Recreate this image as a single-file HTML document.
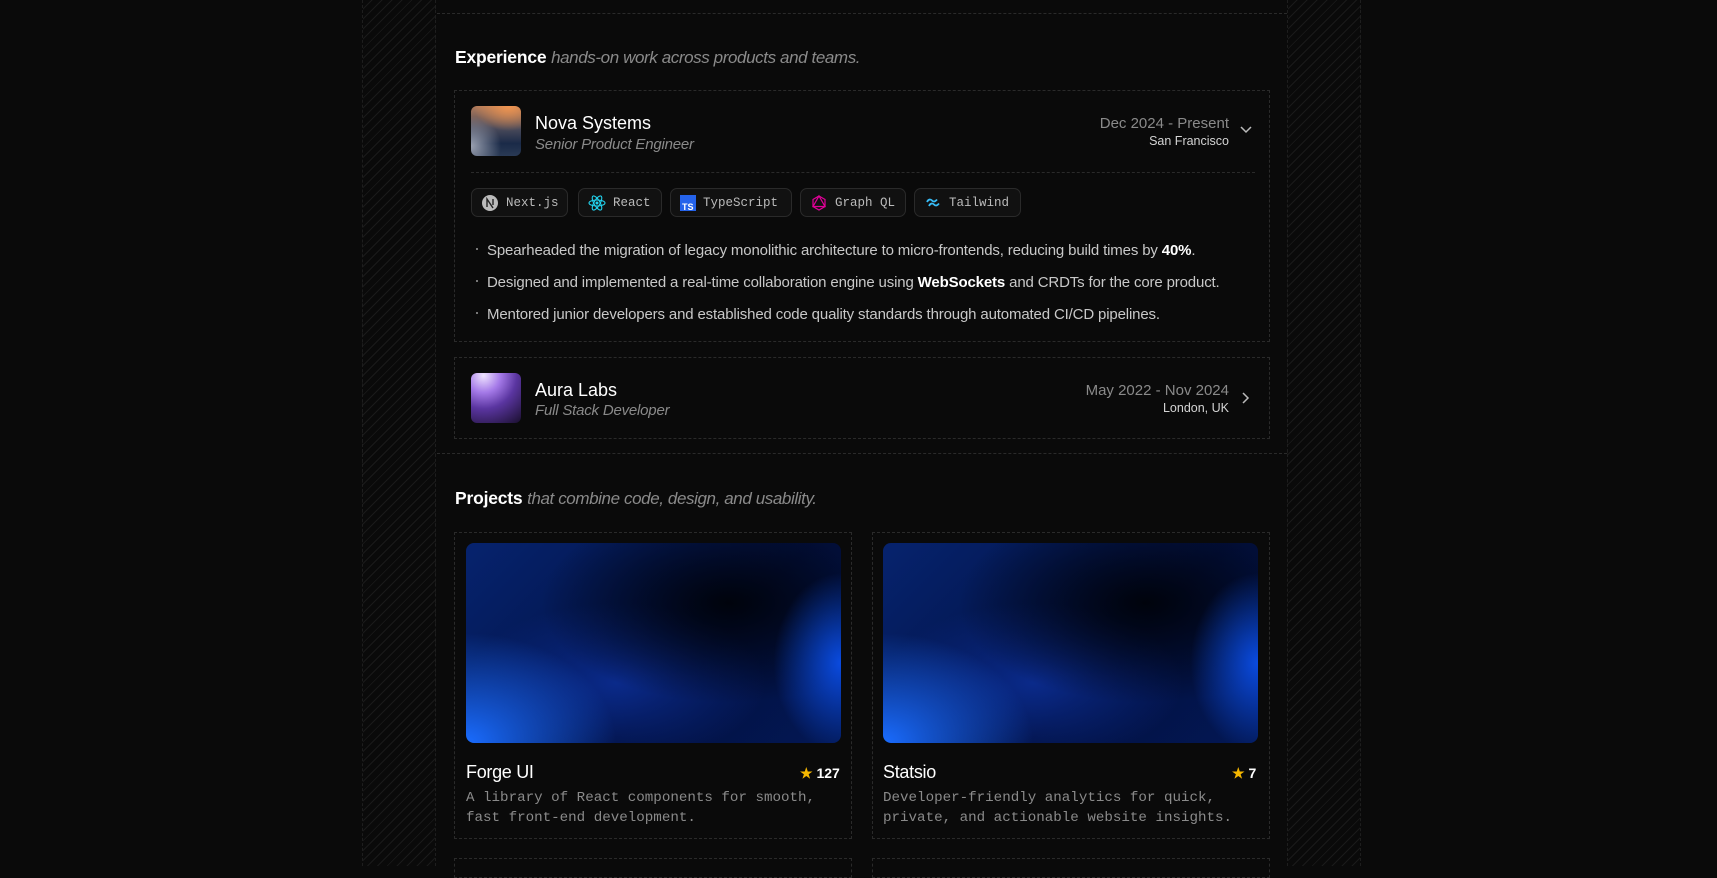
<!DOCTYPE html>
<html><head><meta charset="utf-8"><style>
*{margin:0;padding:0;box-sizing:border-box}
body{width:1717px;height:866px;background:#0a0a0a;overflow:hidden;position:relative;font-family:"Liberation Sans",sans-serif;color:#e5e5e5}
.hatch{position:absolute;top:0;height:866px;width:74px;background:repeating-linear-gradient(135deg,transparent 0 6px,#1a1a1a 6px 7px);border-left:1px dashed #1e1e1e;border-right:1px dashed #1e1e1e}
.a{position:absolute}
.dl{position:absolute;border-top:1px dashed #2a2a2a}
.box{position:absolute;border:1px dashed #2a2a2a}
h2{position:absolute;font-size:17.5px;font-weight:700;color:#fff;left:455px;letter-spacing:-0.2px}
h2 i{font-weight:400;color:#8a8a8a;font-size:17px;letter-spacing:-0.4px}
.logo{position:absolute;width:50px;height:50px;border-radius:6px}
.name{position:absolute;font-size:18px;color:#fff}
.role{position:absolute;font-size:15px;color:#8a8a8a;font-style:italic;letter-spacing:-0.2px}
.date{position:absolute;font-size:15px;color:#8a8a8a;text-align:right;right:488px}
.loc{position:absolute;font-size:12.5px;color:#d4d4d4;text-align:right;right:488px}
.chip{position:absolute;top:188px;height:29px;border:1px solid #2a2a2a;border-radius:7px;background:#111;font-family:"Liberation Mono",monospace;font-size:12.5px;color:#bbb;display:flex;align-items:center;padding:0 8px 0 9px;gap:7px;white-space:nowrap}
.chip svg{flex:none}
.bl{position:absolute;left:487px;font-size:15px;color:#c8c8c8;letter-spacing:-0.15px}
.bl b{color:#fff}
.dot{position:absolute;left:476px;width:2px;height:2px;background:#777}
.img{position:absolute;height:200px;width:375px;border-radius:8px;background:radial-gradient(ellipse 40% 55% at 0% 100%,#1a6cff,transparent),radial-gradient(ellipse 18% 45% at 100% 60%,#0a4be0,transparent),radial-gradient(ellipse 50% 50% at 70% 30%,#00030c,transparent),radial-gradient(ellipse 40% 40% at 40% 70%,#0a2a8a,transparent),linear-gradient(135deg,#06236e,#021040 60%,#031855)}
.pt{position:absolute;font-size:18px;color:#fff;letter-spacing:-0.3px}
.st{position:absolute;font-size:14px;color:#fff;font-weight:700}
.st span{color:#f5b700}
.pd{position:absolute;font-family:"Liberation Mono",monospace;font-size:14.2px;color:#8a8a8a;line-height:20px}
</style></head><body>
<div class="hatch" style="left:362px"></div>
<div class="hatch" style="left:1287px"></div>
<div class="dl" style="left:437px;width:850px;top:13px"></div>
<div class="dl" style="left:437px;width:850px;top:453px"></div>

<h2 style="top:47px">Experience <i>hands-on work across products and teams.</i></h2>

<div class="box" style="left:454px;top:90px;width:816px;height:252px"></div>
<div class="logo" style="left:471px;top:106px;background:radial-gradient(ellipse 70% 50% at 75% 0%,#f09550,transparent),radial-gradient(ellipse 60% 60% at 0% 80%,#9aa0b0,transparent),linear-gradient(180deg,#b07a5a 0%,#4a4a5a 45%,#1a2a48 75%,#2a3a55 100%)"></div>
<div class="name" style="left:535px;top:113px">Nova Systems</div>
<div class="role" style="left:535px;top:136px">Senior Product Engineer</div>
<div class="date" style="top:115px">Dec 2024 - Present</div>
<div class="loc" style="top:134px">San Francisco</div>
<svg class="a" style="left:1239px;top:125px" width="14" height="10" viewBox="0 0 14 10"><path d="M2 2l5 5 5-5" stroke="#bbb" stroke-width="1.5" fill="none"/></svg>
<div class="dl" style="left:471px;width:784px;top:172px"></div>

<div class="chip" style="left:471px;width:97px"><svg width="18" height="18"><circle cx="9" cy="9" r="8" fill="#bbb"/><path d="M6 13V5l6 9M12 5v6" stroke="#222" stroke-width="1.4" fill="none"/></svg>Next.js</div>
<div class="chip" style="left:578px;width:84px"><svg width="18" height="18" viewBox="0 0 18 18"><g fill="none" stroke="#22d3ee" stroke-width="1.1"><ellipse cx="9" cy="9" rx="8" ry="3"/><ellipse cx="9" cy="9" rx="8" ry="3" transform="rotate(60 9 9)"/><ellipse cx="9" cy="9" rx="8" ry="3" transform="rotate(120 9 9)"/></g><circle cx="9" cy="9" r="1.5" fill="#22d3ee"/></svg>React</div>
<div class="chip" style="left:670px;width:122px"><svg width="16" height="16"><rect width="16" height="16" fill="#2563eb"/><text x="2" y="15" font-size="9" fill="#fff" font-family="Liberation Sans" font-weight="bold">TS</text></svg>TypeScript</div>
<div class="chip" style="left:800px;width:106px"><svg width="18" height="18" viewBox="0 0 18 18"><g stroke="#e10098" stroke-width="1.2" fill="none"><polygon points="9,2 15,5.5 15,12.5 9,16 3,12.5 3,5.5"/><polygon points="9,2 15,12.5 3,12.5"/></g></svg>Graph QL</div>
<div class="chip" style="left:914px;width:107px"><svg width="18" height="18" viewBox="0 0 18 18"><path d="M3 8c1.5-3 3.5-3 5-1.5s3 1.5 5-1M5 12c1.5-3 3.5-3 5-1.5s3 1.5 5-1" stroke="#38bdf8" stroke-width="1.8" fill="none"/></svg>Tailwind</div>

<div class="dot" style="top:248px"></div>
<div class="bl" style="top:242px">Spearheaded the migration of legacy monolithic architecture to micro-frontends, reducing build times by <b>40%</b>.</div>
<div class="dot" style="top:280px"></div>
<div class="bl" style="top:274px">Designed and implemented a real-time collaboration engine using <b>WebSockets</b> and CRDTs for the core product.</div>
<div class="dot" style="top:312px"></div>
<div class="bl" style="top:306px">Mentored junior developers and established code quality standards through automated CI/CD pipelines.</div>

<div class="box" style="left:454px;top:357px;width:816px;height:82px"></div>
<div class="logo" style="left:471px;top:373px;background:radial-gradient(circle at 25% 5%,#efe4ff 0%,#a57ae8 28%,#5a35a0 55%,#1a0f2e 100%)"></div>
<div class="name" style="left:535px;top:380px">Aura Labs</div>
<div class="role" style="left:535px;top:402px">Full Stack Developer</div>
<div class="date" style="top:382px">May 2022 - Nov 2024</div>
<div class="loc" style="top:401px">London, UK</div>
<svg class="a" style="left:1241px;top:391px" width="10" height="14" viewBox="0 0 10 14"><path d="M2 2l5 5-5 5" stroke="#bbb" stroke-width="1.5" fill="none"/></svg>

<h2 style="top:488px">Projects <i>that combine code, design, and usability.</i></h2>

<div class="box" style="left:454px;top:532px;width:398px;height:307px"></div>
<div class="img" style="left:466px;top:543px"></div>
<div class="pt" style="left:466px;top:762px">Forge UI</div>
<div class="st" style="left:800px;top:765px"><span>★</span> 127</div>
<div class="pd" style="left:466px;top:788px">A library of React components for smooth,<br>fast front-end development.</div>

<div class="box" style="left:872px;top:532px;width:398px;height:307px"></div>
<div class="img" style="left:883px;top:543px"></div>
<div class="pt" style="left:883px;top:762px">Statsio</div>
<div class="st" style="left:1232px;top:765px"><span>★</span> 7</div>
<div class="pd" style="left:883px;top:788px">Developer-friendly analytics for quick,<br>private, and actionable website insights.</div>

<div class="box" style="left:454px;top:858px;width:398px;height:20px"></div>
<div class="box" style="left:872px;top:858px;width:398px;height:20px"></div>
</body></html>
